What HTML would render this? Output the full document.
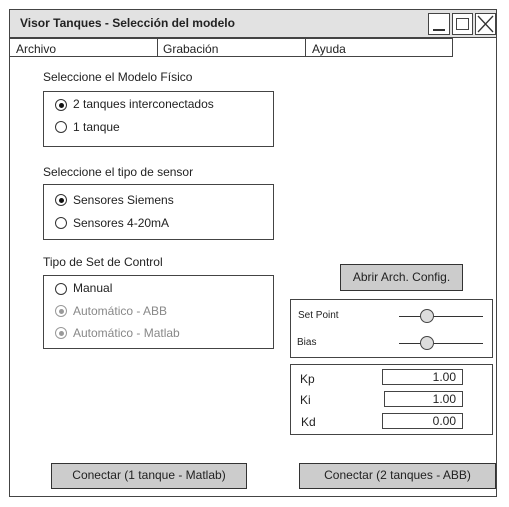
<!DOCTYPE html>
<html><head><style>
body{margin:0;width:509px;height:507px;background:#fff;position:relative;overflow:hidden;font-family:"Liberation Sans",sans-serif;font-size:12px;color:#222}
.a{position:absolute;box-sizing:border-box}
.b{border:1.5px solid #444}
.t{position:absolute;white-space:nowrap}
.r{position:absolute;width:12px;height:12px;border:1.3px solid #333;border-radius:50%;box-sizing:border-box;background:#fff}
.r.on::after{content:"";position:absolute;left:2.5px;top:2.5px;width:5px;height:5px;border-radius:50%;background:#111}
.r.dis{border-color:#999}.r.dis::after{content:"";position:absolute;left:2.5px;top:2.5px;width:5px;height:5px;border-radius:50%;background:#999}
.btn{position:absolute;box-sizing:border-box;border:1.5px solid #333;background:#ccc;text-align:center}
.in{position:absolute;box-sizing:border-box;border:1.3px solid #444;text-align:right;padding-right:6px;line-height:14px}
.knob{position:absolute;width:14px;height:14px;border-radius:50%;border:1.3px solid #444;background:#ddd;box-sizing:border-box}
.line{position:absolute;height:1.3px;background:#333}
</style></head><body>
<div class="a b" style="left:9px;top:9px;width:488px;height:488px"></div>
<div class="a b" style="left:9px;top:9px;width:488px;height:29px;background:#e2e2e2"></div>
<div class="t" style="left:20px;top:16px;font-weight:bold;font-size:12px">Visor Tanques - Selección del modelo</div>
<div class="a b" style="left:428px;top:13px;width:22px;height:22px;background:#fff"></div>
<div class="a" style="left:433px;top:29px;width:12px;height:1.5px;background:#333"></div>
<div class="a b" style="left:452px;top:13px;width:21px;height:22px;background:#fff"></div>
<div class="a b" style="left:456px;top:18px;width:13px;height:12px"></div>
<div class="a b" style="left:475px;top:13px;width:21px;height:22px;background:#fff"></div>
<svg class="a" style="left:475px;top:13px" width="21" height="22"><path d="M3 3L18 19M18 3L3 19" stroke="#333" stroke-width="1.3"/></svg>
<div class="a b" style="left:9px;top:38px;width:149px;height:19px"></div>
<div class="a b" style="left:157px;top:38px;width:149px;height:19px"></div>
<div class="a b" style="left:305px;top:38px;width:148px;height:19px"></div>
<div class="t" style="left:16px;top:42px">Archivo</div>
<div class="t" style="left:163px;top:42px">Grabación</div>
<div class="t" style="left:312px;top:42px">Ayuda</div>

<div class="t" style="left:43px;top:70px">Seleccione el Modelo Físico</div>
<div class="a b" style="left:43px;top:91px;width:231px;height:56px"></div>
<div class="r on" style="left:55px;top:99px"></div><div class="t" style="left:73px;top:97px">2 tanques interconectados</div>
<div class="r" style="left:55px;top:121px"></div><div class="t" style="left:73px;top:120px">1 tanque</div>

<div class="t" style="left:43px;top:165px">Seleccione el tipo de sensor</div>
<div class="a b" style="left:43px;top:184px;width:231px;height:56px"></div>
<div class="r on" style="left:55px;top:194px"></div><div class="t" style="left:73px;top:193px">Sensores Siemens</div>
<div class="r" style="left:55px;top:217px"></div><div class="t" style="left:73px;top:216px">Sensores 4-20mA</div>

<div class="t" style="left:43px;top:255px">Tipo de Set de Control</div>
<div class="a b" style="left:43px;top:275px;width:231px;height:74px"></div>
<div class="r" style="left:55px;top:283px"></div><div class="t" style="left:73px;top:281px">Manual</div>
<div class="r dis" style="left:55px;top:305px"></div><div class="t" style="left:73px;top:304px;color:#888">Automático - ABB</div>
<div class="r dis" style="left:55px;top:327px"></div><div class="t" style="left:73px;top:326px;color:#888">Automático - Matlab</div>

<div class="btn" style="left:340px;top:264px;width:123px;height:27px;line-height:24px">Abrir Arch. Config.</div>
<div class="a b" style="left:290px;top:299px;width:203px;height:59px"></div>
<div class="t" style="left:298px;top:310px;font-size:10px">Set Point</div>
<div class="line" style="left:399px;top:316px;width:84px"></div><div class="knob" style="left:420px;top:309px"></div>
<div class="t" style="left:297px;top:337px;font-size:10px">Bias</div>
<div class="line" style="left:399px;top:343px;width:84px"></div><div class="knob" style="left:420px;top:336px"></div>

<div class="a b" style="left:290px;top:364px;width:203px;height:71px"></div>
<div class="t" style="left:300px;top:372px">Kp</div><div class="in" style="left:382px;top:369px;width:81px;height:16px">1.00</div>
<div class="t" style="left:300px;top:393px">Ki</div><div class="in" style="left:384px;top:391px;width:79px;height:16px">1.00</div>
<div class="t" style="left:301px;top:415px">Kd</div><div class="in" style="left:382px;top:413px;width:81px;height:16px">0.00</div>

<div class="btn" style="left:51px;top:463px;width:196px;height:26px;line-height:23px">Conectar (1 tanque - Matlab)</div>
<div class="btn" style="left:299px;top:463px;width:197px;height:26px;line-height:23px">Conectar (2 tanques - ABB)</div>
</body></html>
